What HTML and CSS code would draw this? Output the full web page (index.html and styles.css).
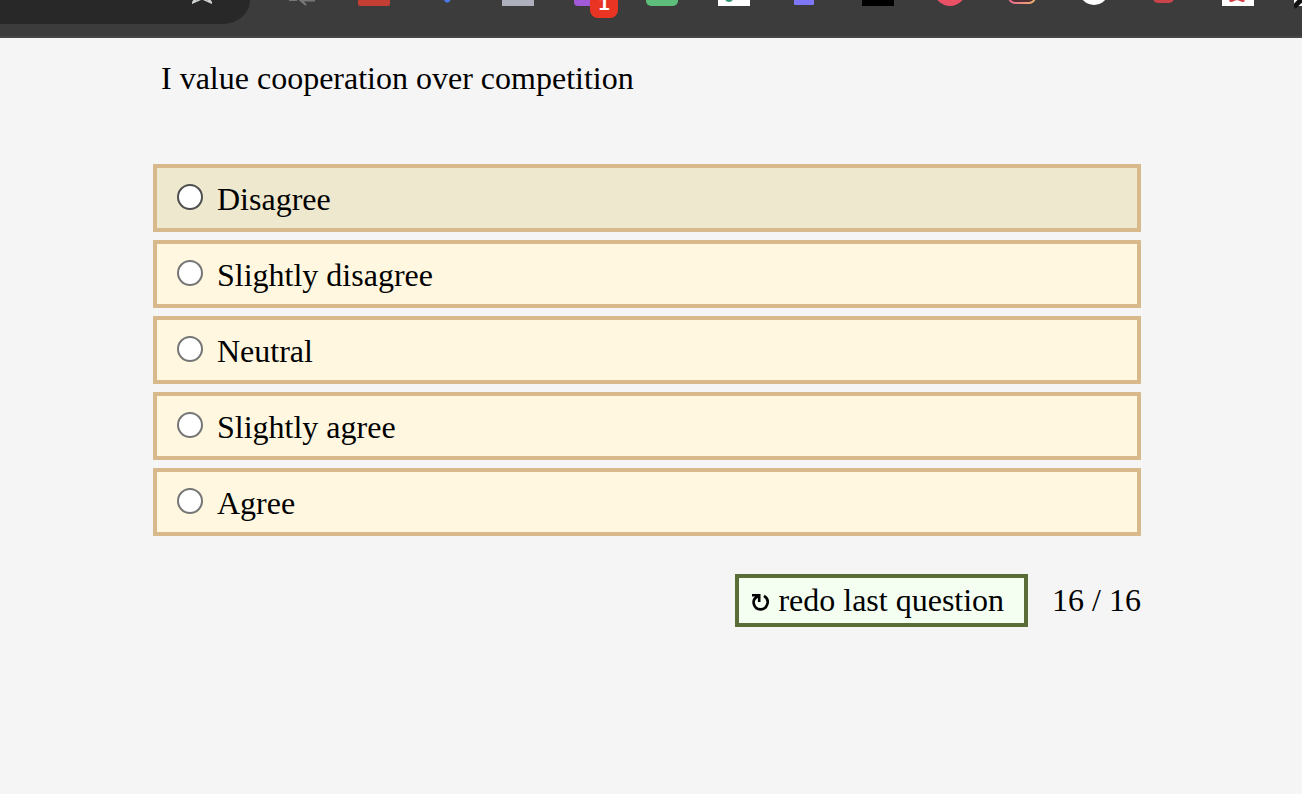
FILE: index.html
```html
<!DOCTYPE html>
<html lang="en">
<head>
<meta charset="utf-8">
<title>Questionnaire</title>
<link rel="stylesheet" href="styles.css">
</head>
<body>
<header class="toolbar">
  <div class="address">
    <svg class="star" viewBox="0 0 24 8" aria-hidden="true"><path d="M4-1 2 2V4L6 2.200 11 0H13L18 2.200 22 4V2L20-1H17L18 .500 12-2 6 .500 7-1Z" fill="#d0d3d3"/></svg>
  </div>
  <div class="icons" aria-hidden="true">
    <svg class="icon" viewBox="0 0 32 20"><path d="M3 0h8M12-2l8 7M16 .500h13" fill="none" stroke="#777" stroke-width="2.200"/></svg>
    <svg class="icon" viewBox="0 0 32 20"><rect y="-26" width="32" height="32" rx="2" fill="#c43e33"/></svg>
    <svg class="icon" viewBox="0 0 32 20"><path d="M11-3h12.500L19 2q-1.500 1.500-3.500 0Z" fill="#4879ee"/></svg>
    <svg class="icon" viewBox="0 0 32 20"><path d="M0-1h32v7H0Z" fill="#adafbc"/></svg>
    <div class="icon-wrap">
      <svg class="icon" viewBox="0 0 32 20"><rect y="-26" width="32" height="32" rx="4" fill="#a15bd9"/></svg>
      <span class="badge">1</span>
    </div>
    <svg class="icon" viewBox="0 0 32 20"><rect y="-26" width="32" height="32" rx="5" fill="#5dbd7b"/></svg>
    <svg class="icon" viewBox="0 0 32 20"><path d="M0-1h32v7H0Z" fill="#fff"/><circle cx="11" cy="-2" r="4" fill="#349472"/></svg>
    <svg class="icon" viewBox="0 0 32 20"><rect x="4" y="-15" width="20" height="20" rx="1" fill="#7f76f5"/></svg>
    <svg class="icon" viewBox="0 0 32 20"><path d="M0-1h32v7H0Z" fill="#000"/></svg>
    <svg class="icon" viewBox="0 0 32 20"><circle cx="16" cy="-10" r="16" fill="#eb5165"/></svg>
    <svg class="icon" viewBox="0 0 32 20"><defs><linearGradient id="warm"><stop stop-color="#e6688f"/><stop offset="1" stop-color="#eeb06c"/></linearGradient></defs><rect x="3" y="-23" width="26" height="26" rx="6" fill="#512f37" stroke="url(#warm)" stroke-width="2"/></svg>
    <svg class="icon" viewBox="0 0 32 20"><circle cx="16" cy="-10" r="15" fill="#fff"/></svg>
    <svg class="icon" viewBox="0 0 32 20"><rect x="3" y="-17" width="21" height="20" rx="5" fill="#c9444b"/></svg>
    <svg class="icon" viewBox="0 0 32 20"><path d="M0-1h32v7H0Z" fill="#fff"/><path d="M8-1h13l2 2q-2 2-5 0l-3-1-3 1q-3 2-5 0Z" fill="#d63c45"/></svg>
    <svg class="icon" viewBox="0 0 32 20"><path d="M0-1h32v7H0Z" fill="#fff"/><path d="M0 7 9-2" stroke="#111" stroke-width="5"/></svg>
  </div>
</header>
<main>
  <form class="quiz">
    <fieldset class="question">
      <legend class="prompt">I value cooperation over competition</legend>
      <div class="options">
        <label class="option current"><input type="radio" name="answer" value="1">Disagree</label>
        <label class="option"><input type="radio" name="answer" value="2">Slightly disagree</label>
        <label class="option"><input type="radio" name="answer" value="3">Neutral</label>
        <label class="option"><input type="radio" name="answer" value="4">Slightly agree</label>
        <label class="option"><input type="radio" name="answer" value="5">Agree</label>
      </div>
    </fieldset>
    <div class="actions">
      <button class="redo" type="button"><svg class="redo-icon" viewBox="0 0 19 18" aria-hidden="true"><path d="M1 2.300H8.200V9M7.500 3C3 5 2 8.500 3 11.500A6.900 6.900 0 0 0 16 12C17.500 8.500 16.500 5 13 2.800" fill="none" stroke="#000" stroke-width="2.600"/></svg>redo last question</button>
      <span class="progress">16 / 16</span>
    </div>
  </form>
</main>
</body>
</html>
```
FILE: styles.css
```css
* {
  box-sizing: border-box;
}

body {
  margin: 0;
  background: #f5f5f5;
  color: #000;
  font: 32px/36px "Liberation Serif", "Times New Roman", serif;
}

.toolbar {
  display: flex;
  align-items: flex-start;
  gap: 36px;
  height: 38px;
  overflow: hidden;
  background: #3c3c3c;
  border-bottom: 2px solid #464646;
}

.address {
  display: flex;
  flex: none;
  justify-content: flex-end;
  width: 250px;
  height: 24px;
  padding-right: 36px;
  background: #282828;
  border-bottom-right-radius: 32px 28px;
}

.star {
  width: 24px;
  height: 8px;
}

.icons {
  display: flex;
  gap: 40px;
}

.icon {
  display: block;
  flex: none;
  width: 32px;
  height: 20px;
}

.icon-wrap {
  position: relative;
}

.badge {
  position: absolute;
  right: -12px;
  bottom: 2px;
  width: 28px;
  height: 28px;
  border-radius: 8px;
  background: #e93323;
  color: #fff;
  font: bold 20px/26px "Liberation Sans", Arial, sans-serif;
  text-align: center;
}

.quiz {
  margin: 0 161px 0 153px;
  padding-top: 22px;
}

.question {
  min-width: 0;
  margin: 0;
  padding: 0;
  border: 0;
}

.prompt {
  padding: 0 8px;
}

.options {
  display: grid;
  gap: 8px;
  padding-top: 68px;
}

.option {
  display: flex;
  align-items: baseline;
  gap: 14px;
  padding: 13px 20px 11px;
  border: 4px solid #d7b98c;
  background: #fff7df;
}

.option.current {
  background: #eee8cf;
}

.option input {
  appearance: none;
  flex: none;
  width: 26px;
  height: 26px;
  margin: 0;
  border: 2px solid #767676;
  border-radius: 50%;
  background: #fff;
}

.option.current input {
  border-color: #4f4f4f;
}

.actions {
  display: flex;
  align-items: center;
  justify-content: flex-end;
  gap: 24px;
  margin-top: 38px;
  line-height: 37px;
}

.redo {
  display: flex;
  align-items: center;
  gap: 8px;
  padding: 4px 20px 4px 12px;
  border: 4px solid #5a6c38;
  background: #f4fff2;
  color: inherit;
  font: inherit;
}

.redo-icon {
  width: 19px;
  height: 18px;
  margin-top: 2px;
}
```
